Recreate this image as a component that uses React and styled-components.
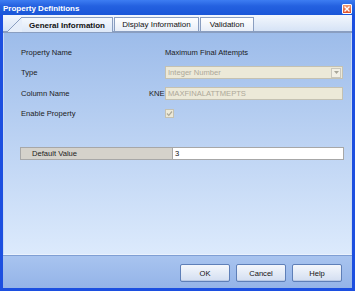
import React from "react";
import styled, { createGlobalStyle } from "styled-components";

const Global = createGlobalStyle`
  html, body { margin: 0; padding: 0; background: #ffffff; }
  body { font-family: "Liberation Sans", Arial, sans-serif; }
  * { box-sizing: border-box; }
`;

const Window = styled.div`
  width: 355px;
  height: 291px;
  display: flex;
  flex-direction: column;
  background: #1c4fe0;
  overflow: hidden;
`;

const TitleBar = styled.div`
  height: 15px;
  flex: none;
  display: flex;
  align-items: center;
  justify-content: space-between;
  padding: 0 3px 0 3px;
  background: linear-gradient(#3d7df2 0%, #2461e0 40%, #1a56d8 100%);
`;

const Title = styled.div`
  color: #ffffff;
  font-weight: bold;
  font-size: 8px;
  padding-top: 1px;
`;

const CloseButton = styled.div`
  width: 10px;
  height: 10px;
  margin-top: 2px;
  border: 1px solid #ffffff;
  border-radius: 1px;
  background: linear-gradient(#f29a72, #e0512a);
  display: flex;
  align-items: center;
  justify-content: center;
`;

const Frame = styled.div`
  flex: 1;
  display: flex;
  flex-direction: column;
  margin: 0 3px 3px 3px;
  min-height: 0;
`;

const TabStrip = styled.div`
  height: 18px;
  flex: none;
  display: flex;
  align-items: flex-end;
  padding-left: 4px;
  background: linear-gradient(#f3f7fd, #d6e3f6);
  border-bottom: 2px solid #8a9ec0;
`;

const ActiveTab = styled.div`
  display: flex;
  align-items: stretch;
  height: 15px;
  margin-bottom: -1px;
`;

const TabBody = styled.div`
  display: flex;
  align-items: center;
  justify-content: center;
  width: ${(p) => p.$w}px;
  border: 1px solid #8a9ec0;
  border-bottom: none;
  border-left: ${(p) => (p.$slant ? "none" : "1px solid #8a9ec0")};
  background: ${(p) => (p.$active ? "linear-gradient(#f4f8fd, #dde8f8)" : "linear-gradient(#ffffff, #e8eef8)")};
  font-size: 8px;
  font-weight: ${(p) => (p.$active ? "bold" : "normal")};
  color: #111111;
  margin-left: ${(p) => p.$ml || 0}px;
  height: ${(p) => (p.$active ? 15 : 14)}px;
  white-space: nowrap;
`;

const Content = styled.div`
  flex: 1;
  display: flex;
  flex-direction: column;
  background: linear-gradient(#9dbcea, #dceafc);
  border-left: 1px solid #c8daf6;
  border-right: 1px solid #c8daf6;
  border-bottom: 1px solid #eaf2fd;
  padding: 9px 8px 0 17px;
`;

const FormGrid = styled.div`
  display: grid;
  grid-template-columns: 128px 16px 178px;
  grid-auto-rows: 20.5px;
  align-items: center;
`;

const Label = styled.div`
  font-size: 7.6px;
  color: #1b1b1b;
`;

const Prefix = styled.div`
  font-size: 7.6px;
  color: #1b1b1b;
  text-align: right;
  padding-right: 1px;
`;

const Value = styled.div`
  font-size: 7.6px;
  color: #1b1b1b;
`;

const DisabledField = styled.div`
  height: 13px;
  display: flex;
  align-items: center;
  justify-content: space-between;
  background: #ece9d8;
  border: 1px solid #c4c1b2;
  color: #aca899;
  font-size: 7.6px;
  padding-left: 2px;
`;

const DropButton = styled.div`
  width: 10px;
  height: 10px;
  margin-right: 1px;
  border: 1px solid #c9c7bd;
  background: #f2f0e6;
  display: flex;
  align-items: center;
  justify-content: center;
`;

const CheckBox = styled.div`
  width: 9px;
  height: 9px;
  border: 1px solid #c4c1b2;
  background: #ece9d8;
  display: flex;
  align-items: center;
  justify-content: center;
`;

const PropRow = styled.div`
  margin-top: 23px;
  width: 324px;
  margin-left: -1px;
  height: 13px;
  display: grid;
  grid-template-columns: 152px 1fr;
  border: 1px solid #a7a7a7;
`;

const PropLabel = styled.div`
  background: #d5d2cb;
  font-size: 7.6px;
  color: #1b1b1b;
  display: flex;
  align-items: center;
  padding-left: 11px;
  border-right: 1px solid #a7a7a7;
`;

const PropValue = styled.div`
  background: #ffffff;
  font-size: 7.6px;
  color: #111;
  display: flex;
  align-items: center;
  padding-left: 2px;
`;

const Footer = styled.div`
  height: 33px;
  flex: none;
  display: flex;
  justify-content: flex-end;
  align-items: flex-start;
  gap: 6px;
  padding: 8px 10px 0 0;
  background: linear-gradient(#a8c4ef, #94b4e8);
  border-top: 1px solid #7f9fd4;
`;

const Button = styled.button`
  width: 50px;
  height: 18px;
  border: 1px solid #5e7fb8;
  border-radius: 2px;
  background: linear-gradient(#f4f7fc, #d3def1);
  box-shadow: inset 0 -1px 0 #b9c9e5;
  font-family: "Liberation Sans", Arial, sans-serif;
  font-size: 7.6px;
  color: #111;
  padding: 0;
`;

const tabs = [
  { label: "Display Information", w: 85 },
  { label: "Validation", w: 54 },
];

export default function App() {
  return (
    <>
      <Global />
      <Window>
        <TitleBar>
          <Title>Property Definitions</Title>
          <CloseButton>
            <svg width="6" height="6" viewBox="0 0 6 6">
              <path d="M0.5 0.5 L5.5 5.5 M5.5 0.5 L0.5 5.5" stroke="#fff" strokeWidth="1.4" />
            </svg>
          </CloseButton>
        </TitleBar>
        <Frame>
          <TabStrip>
            <ActiveTab>
              <svg width="15" height="15" viewBox="0 0 15 15" style={{ display: "block" }}>
                <polygon points="0,15 15,0 15,15" fill="#e6eefa" />
                <line x1="0" y1="15" x2="15" y2="0" stroke="#8a9ec0" strokeWidth="1" />
              </svg>
              <TabBody $active $slant $w={91}>General Information</TabBody>
            </ActiveTab>
            {tabs.map((t) => (
              <TabBody key={t.label} $w={t.w} $ml={1}>
                {t.label}
              </TabBody>
            ))}
          </TabStrip>
          <Content>
            <FormGrid>
              <Label>Property Name</Label>
              <span />
              <Value>Maximum Final Attempts</Value>

              <Label>Type</Label>
              <span />
              <DisabledField>
                Integer Number
                <DropButton>
                  <svg width="5" height="3" viewBox="0 0 5 3">
                    <polygon points="0,0 5,0 2.5,3" fill="#a8a699" />
                  </svg>
                </DropButton>
              </DisabledField>

              <Label>Column Name</Label>
              <Prefix>KNE</Prefix>
              <DisabledField>MAXFINALATTMEPTS</DisabledField>

              <Label>Enable Property</Label>
              <span />
              <CheckBox>
                <svg width="7" height="7" viewBox="0 0 7 7">
                  <path d="M1 3.5 L2.8 5.3 L6 1.5" stroke="#aca899" strokeWidth="1.2" fill="none" />
                </svg>
              </CheckBox>
            </FormGrid>
            <PropRow>
              <PropLabel>Default Value</PropLabel>
              <PropValue>3</PropValue>
            </PropRow>
          </Content>
          <Footer>
            <Button>OK</Button>
            <Button>Cancel</Button>
            <Button>Help</Button>
          </Footer>
        </Frame>
      </Window>
    </>
  );
}
